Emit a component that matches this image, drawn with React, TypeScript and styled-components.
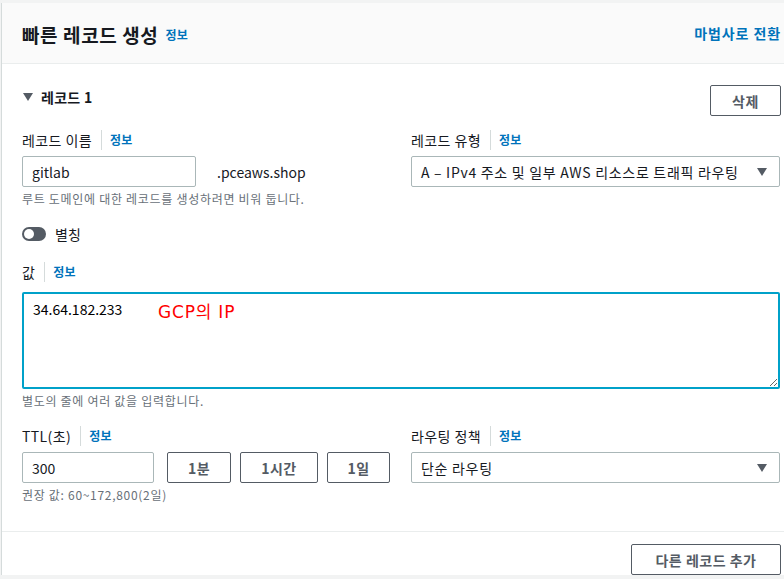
import React from 'react';
import styled, { createGlobalStyle } from 'styled-components';

const GlobalStyle = createGlobalStyle`
  html, body {
    margin: 0;
    padding: 0;
    background: #f2f3f3;
    overflow: hidden;
  }
  body {
    font-family: "Noto Sans CJK KR", "Noto Sans", sans-serif;
    color: #16191f;
  }
`;

const colors = {
  text: '#16191f',
  hint: '#687078',
  link: '#0073bb',
  border: '#aab7b8',
  divider: '#eaeded',
  button: '#545b64',
  focus: '#00a1c9',
};

const Page = styled.div`
  padding: 3px 0 0 1px;
  width: 820px;
  height: 579px;
  box-sizing: border-box;
`;

const Card = styled.section`
  width: 799px;
  background: #fff;
  border-left: 1px solid #d5dbdb;
`;

const Header = styled.header`
  display: flex;
  align-items: center;
  justify-content: space-between;
  height: 61px;
  padding: 0 20px;
  background: #fafafa;
  border-bottom: 1px solid ${colors.divider};
  box-sizing: border-box;
`;

const Title = styled.h2`
  display: flex;
  align-items: center;
  gap: 7px;
  margin: 4px 0 0;
  font-size: 19px;
  font-weight: 700;
  line-height: 24px;
  letter-spacing: 0.6px;
`;

const Link = styled.a<{ $size?: number }>`
  color: ${colors.link};
  font-size: ${(p) => p.$size ?? 12}px;
  font-weight: 700;
  letter-spacing: ${(p) => (p.$size ? 0.9 : 0.3)}px;
  text-decoration: none;
  cursor: pointer;
`;

const Body = styled.div`
  padding: 21px 20px 28px;
  display: flex;
  flex-direction: column;
`;

const SectionHead = styled.div`
  display: flex;
  justify-content: space-between;
  align-items: flex-start;
`;

const Expander = styled.h3`
  display: flex;
  align-items: center;
  gap: 8px;
  margin: 2px 0 0;
  font-size: 14px;
  font-weight: 700;
  line-height: 20px;
  letter-spacing: 0.3px;
`;

const Caret = styled.span`
  width: 0;
  height: 0;
  margin-left: 1px;
  border-left: 5px solid transparent;
  border-right: 5px solid transparent;
  border-top: 8px solid ${colors.button};
`;

const Button = styled.button<{ $width: number }>`
  width: ${(p) => p.$width}px;
  height: 31px;
  padding: 0;
  background: #fff;
  border: 1px solid ${colors.button};
  border-radius: 2px;
  color: ${colors.button};
  font-family: inherit;
  font-size: 14px;
  font-weight: 700;
  letter-spacing: 0.5px;
  cursor: pointer;
  flex: none;
`;

const Grid = styled.div<{ $top: number }>`
  display: grid;
  grid-template-columns: 369px 369px;
  column-gap: 20px;
  margin-top: ${(p) => p.$top}px;
`;

const Field = styled.div<{ $top?: number }>`
  display: flex;
  flex-direction: column;
  margin-top: ${(p) => p.$top ?? 0}px;
`;

const Label = styled.label<{ $gap?: number }>`
  display: flex;
  align-items: center;
  font-size: 14px;
  line-height: 20px;
  letter-spacing: 0.4px;
  margin-bottom: ${(p) => p.$gap ?? 6}px;
`;

const Info = styled(Link)`
  margin-left: 9px;
  padding-left: 8px;
  border-left: 1px solid #d5dbdb;
  line-height: 20px;
`;

const Row = styled.div<{ $gap: number }>`
  display: flex;
  align-items: center;
  gap: ${(p) => p.$gap}px;
`;

const Input = styled.input<{ $width: number; $after?: number }>`
  width: ${(p) => p.$width}px;
  height: 31px;
  margin-right: ${(p) => p.$after ?? 0}px;
  box-sizing: border-box;
  padding: 0 9px;
  border: 1px solid ${colors.border};
  border-radius: 2px;
  font-family: inherit;
  font-size: 14px;
  color: ${colors.text};
  outline: none;
`;

const Suffix = styled.span`
  font-size: 14px;
`;

const Hint = styled.div`
  margin-top: 4px;
  font-size: 12px;
  line-height: 16px;
  letter-spacing: 0.7px;
  color: ${colors.hint};
`;

const Select = styled.div`
  display: flex;
  align-items: center;
  justify-content: space-between;
  height: 31px;
  box-sizing: border-box;
  padding: 0 12px 0 9px;
  border: 1px solid ${colors.border};
  border-radius: 2px;
  font-size: 14px;
  letter-spacing: 0.7px;
`;

const ToggleRow = styled.div`
  display: flex;
  align-items: center;
  gap: 9px;
  margin-top: 19px;
  font-size: 14px;
  line-height: 16px;
`;

const Toggle = styled.span`
  position: relative;
  width: 24px;
  height: 14px;
  border-radius: 7px;
  background: ${colors.button};
  &::after {
    content: '';
    position: absolute;
    top: 2px;
    left: 2px;
    width: 10px;
    height: 10px;
    border-radius: 50%;
    background: #fff;
  }
`;

const TextAreaWrap = styled.div`
  position: relative;
`;

const TextArea = styled.textarea`
  display: block;
  width: 758px;
  height: 97px;
  box-sizing: border-box;
  padding: 5px 9px;
  border: 2px solid ${colors.focus};
  border-radius: 2px;
  font-family: inherit;
  font-size: 14px;
  line-height: 20px;
  color: #000;
  outline: none;
`;

const Note = styled.span`
  position: absolute;
  left: 136px;
  top: 6px;
  color: #ff0000;
  font-family: "DejaVu Sans", "Noto Sans CJK KR", sans-serif;
  font-size: 17px;
  letter-spacing: 0.8px;
  pointer-events: none;
`;

const Footer = styled.footer`
  display: flex;
  justify-content: flex-end;
  padding: 12px 20px 0;
  border-top: 1px solid ${colors.divider};
`;

const InfoLabel = ({ children }: { children: React.ReactNode }) => (
  <>
    {children}
    <Info>정보</Info>
  </>
);

export default function App() {
  return (
    <>
      <GlobalStyle />
      <Page>
        <Card>
          <Header>
            <Title>
              빠른 레코드 생성 <Link>정보</Link>
            </Title>
            <Link $size={14}>마법사로 전환</Link>
          </Header>
          <Body>
            <SectionHead>
              <Expander>
                <Caret />
                레코드 1
              </Expander>
              <Button $width={71}>삭제</Button>
            </SectionHead>

            <Grid $top={14}>
              <Field>
                <Label>
                  <InfoLabel>레코드 이름</InfoLabel>
                </Label>
                <Row $gap={21}>
                  <Input $width={174} defaultValue="gitlab" />
                  <Suffix>.pceaws.shop</Suffix>
                </Row>
                <Hint>루트 도메인에 대한 레코드를 생성하려면 비워 둡니다.</Hint>
              </Field>
              <Field>
                <Label>
                  <InfoLabel>레코드 유형</InfoLabel>
                </Label>
                <Select>
                  A – IPv4 주소 및 일부 AWS 리소스로 트래픽 라우팅
                  <Caret />
                </Select>
              </Field>
            </Grid>

            <ToggleRow>
              <Toggle />
              별칭
            </ToggleRow>

            <Field $top={20}>
              <Label $gap={10}>
                <InfoLabel>값</InfoLabel>
              </Label>
              <TextAreaWrap>
                <TextArea defaultValue="34.64.182.233" />
                <Note>GCP의 IP</Note>
              </TextAreaWrap>
              <Hint>별도의 줄에 여러 값을 입력합니다.</Hint>
            </Field>

            <Grid $top={17}>
              <Field>
                <Label>
                  <InfoLabel>TTL(초)</InfoLabel>
                </Label>
                <Row $gap={9}>
                  <Input $width={132} $after={4} defaultValue="300" />
                  <Button $width={64}>1분</Button>
                  <Button $width={78}>1시간</Button>
                  <Button $width={63}>1일</Button>
                </Row>
                <Hint>권장 값: 60~172,800(2일)</Hint>
              </Field>
              <Field>
                <Label>
                  <InfoLabel>라우팅 정책</InfoLabel>
                </Label>
                <Select>
                  단순 라우팅
                  <Caret />
                </Select>
              </Field>
            </Grid>
          </Body>
          <Footer>
            <Button $width={150}>다른 레코드 추가</Button>
          </Footer>
        </Card>
      </Page>
    </>
  );
}
